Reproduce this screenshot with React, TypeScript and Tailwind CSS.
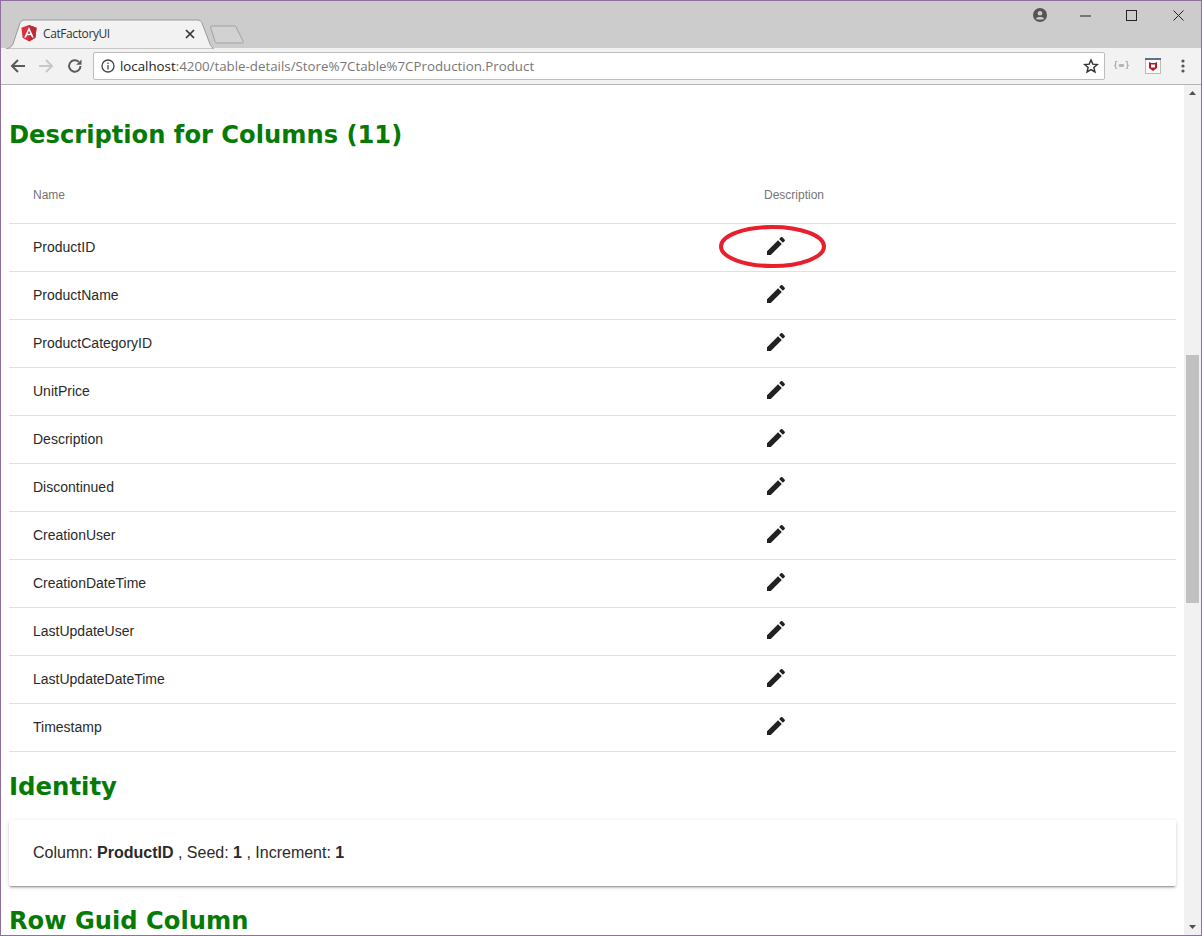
import React from "react";

const rows = ["ProductID","ProductName","ProductCategoryID","UnitPrice","Description","Discontinued","CreationUser","CreationDateTime","LastUpdateUser","LastUpdateDateTime","Timestamp"];

function Edit() {
  return (
    <svg className="mb-[4px]" width="24" height="24" viewBox="0 0 24 24" fill="#212121">
      <path d="M3 17.25V21h3.75L17.81 9.94l-3.75-3.75L3 17.25zM20.71 7.04c.39-.39.39-1.02 0-1.41l-2.34-2.34c-.39-.39-1.02-.39-1.41 0l-1.83 1.83 3.75 3.75 1.83-1.83z" />
    </svg>
  );
}

function Tab() {
  return (
    <div className="relative flex h-[29px] w-[208px] items-center pl-[15px]">
      <svg className="absolute left-0 top-0" width="208" height="30" viewBox="0 0 208 30">
        <path d="M0.5 29.5 C4 29.5 6 27 7 25 L14 4 C15 2 16 1 19 1 L191 1 C194 1 195 2 196 4 L204 25 C205 27 206 29 208 29.5 L208 30 L0 30 Z" fill="#f2f2f2" stroke="#9a9a9a" strokeWidth="1" />
      </svg>
      <svg className="relative" width="16" height="17" viewBox="0 0 16 17">
        <path d="M8 0 L15.6 2.7 L14.4 12.8 L8 16.6 L1.6 12.8 L0.4 2.7 Z" fill="#d9323f" />
        <path d="M8 0 L15.6 2.7 L14.4 12.8 L8 16.6 Z" fill="#bb2a35" />
        <path d="M8 2 L3.2 12.6 H5 L6 10.2 H10 L11 12.6 H12.8 Z M6.7 8.7 L8 5.6 L9.3 8.7 Z" fill="#fff" />
      </svg>
      <span className="relative ml-[6px] font-['Open_Sans',sans-serif] text-[12px] tracking-[-0.4px] text-[#333]">CatFactoryUI</span>
      <svg className="absolute left-[179px] top-[10px]" width="10" height="10" viewBox="0 0 10 10" stroke="#333" strokeWidth="1.7" fill="none">
        <path d="M1 1 L9 9 M9 1 L1 9" />
      </svg>
    </div>
  );
}

export default function App() {
  return (
    <div className="flex h-[936px] w-[1202px] flex-col overflow-hidden border border-[#8f6f9d] bg-white font-['Liberation_Sans',sans-serif]">
      {/* title bar */}
      <div className="flex h-[47px] shrink-0 items-end justify-between bg-[#cccccc] pl-[5px]">
        <div className="flex items-end">
          <Tab />
          <svg className="mb-[3px] ml-[-5px]" width="38" height="20" viewBox="0 0 38 20">
            <path d="M1.5 2 C1.5 1.2 2 1 3 1 L25 1 C26 1 26.5 1.3 27 2 L34 16 C34.5 17.5 34 18 33 18 L8 18 C7 18 6.5 17.5 6 16.5 Z" fill="#d2d2d2" stroke="#a0a0a0" />
          </svg>
        </div>
        <div className="flex h-full items-start">
          <svg className="mr-[33px] mt-[7px]" width="14" height="14" viewBox="0 0 14 14">
            <circle cx="7" cy="7" r="7" fill="#555" />
            <circle cx="7" cy="5.2" r="2.3" fill="#ccc" />
            <path d="M2.8 10.6 C4 8.6 10 8.6 11.2 10.6 C10 12.2 4 12.2 2.8 10.6 Z" fill="#ccc" />
          </svg>
          <svg className="mr-[35px] mt-[14px]" width="11" height="2" viewBox="0 0 11 2"><rect width="11" height="1" y="0.5" fill="#222" /></svg>
          <svg className="mr-[36px] mt-[9px]" width="11" height="11" viewBox="0 0 11 11" fill="none" stroke="#222"><rect x="0.5" y="0.5" width="10" height="10" /></svg>
          <svg className="mr-[17px] mt-[9px]" width="11" height="11" viewBox="0 0 11 11" fill="none" stroke="#222"><path d="M0.5 0.5 L10.5 10.5 M10.5 0.5 L0.5 10.5" /></svg>
        </div>
      </div>
      {/* toolbar */}
      <div className="flex h-[37px] shrink-0 items-center border-b border-[#b4b4b4] bg-[#f2f2f2] pl-[9px]">
        <svg width="16" height="16" viewBox="0 0 16 16" fill="none" stroke="#5a5a5a" strokeWidth="2"><path d="M15 8 H2 M8 2 L2 8 L8 14" /></svg>
        <svg className="ml-[12px]" width="16" height="16" viewBox="0 0 16 16" fill="none" stroke="#c8c8c8" strokeWidth="2"><path d="M1 8 H14 M8 2 L14 8 L8 14" /></svg>
        <svg className="ml-[13px]" width="16" height="16" viewBox="0 0 16 16" fill="none" stroke="#5a5a5a" strokeWidth="2"><path d="M13.5 8 A5.7 5.7 0 1 1 11.8 3.9" /><path d="M14.5 1.5 V6.8 H9.2 Z" fill="#5a5a5a" stroke="none" /></svg>
        <div className="ml-[10px] flex h-[28px] w-[1012px] items-center rounded-[2px] border border-[#bdbdbd] bg-white pl-[7px] pr-[5px]">
          <svg width="14" height="14" viewBox="0 0 14 14" fill="none" stroke="#444" strokeWidth="1.3"><circle cx="7" cy="7" r="6" /><path d="M7 6 V10.5 M7 3.4 V5" /></svg>
          <span className="ml-[5px] flex-1 whitespace-nowrap pt-[1px] font-['Open_Sans',sans-serif] text-[13.3px] text-[#777]"><span className="text-[#222]">localhost</span>:4200/table-details/Store%7Ctable%7CProduction.Product</span>
          <svg width="16" height="16" viewBox="0 0 24 24" fill="none" stroke="#333" strokeWidth="2.2"><path d="M12 3 L14.7 9.2 L21.4 9.8 L16.3 14.2 L17.9 20.8 L12 17.3 L6.1 20.8 L7.7 14.2 L2.6 9.8 L9.3 9.2 Z" /></svg>
        </div>
        <span className="ml-[8px] w-[14px] whitespace-nowrap font-['DejaVu_Sans',sans-serif] text-[8px] text-[#888]">{"{≡}"}</span>
        <svg className="ml-[18px]" width="16" height="16" viewBox="0 0 16 16">
          <rect x="0.5" y="0.5" width="15" height="15" fill="#fafafa" stroke="#bbb" />
          <rect x="0" y="0" width="16" height="2" fill="#5d7287" />
          <path d="M4 4 L6 5 H10 L12 4 V10 L8 13 L4 10 Z" fill="#b1182b" />
          <rect x="6" y="6.5" width="4" height="3" fill="#fafafa" />
        </svg>
        <svg className="ml-[20px]" width="4" height="14" viewBox="0 0 4 14" fill="#555"><circle cx="2" cy="2" r="1.6" /><circle cx="2" cy="7" r="1.6" /><circle cx="2" cy="12" r="1.6" /></svg>
      </div>
      {/* page */}
      <div className="flex min-h-0 flex-1">
        <main className="relative min-w-0 flex-1 overflow-hidden px-[8px] pt-[36px]">
          <h2 className="mb-[18px] whitespace-nowrap font-['DejaVu_Sans',sans-serif] text-[24.2px] font-bold leading-[28px] text-[#057a05]">Description for Columns (11)</h2>
          <div className="flex h-[57px] items-center border-b border-[#e0e0e0] pl-[24px] text-[12px] text-[#757575]">
            <div className="w-[731px]">Name</div>
            <div>Description</div>
          </div>
          {rows.map((name) => (
            <div key={name} className="flex h-[48px] items-center border-b border-[#e0e0e0] pl-[24px] text-[14px] text-[#2a2a2a]">
              <div className="w-[731px]">{name}</div>
              <Edit />
            </div>
          ))}
          <h2 className="mb-[19px] mt-[21px] font-['DejaVu_Sans',sans-serif] text-[24.4px] font-bold leading-[28px] text-[#057a05]">Identity</h2>
          <div className="flex h-[66px] items-center rounded-[2px] bg-white px-[24px] text-[16px] text-[#2a2a2a] shadow-[0_3px_1px_-2px_rgba(0,0,0,0.2),0_2px_2px_0_rgba(0,0,0,0.14),0_1px_5px_0_rgba(0,0,0,0.12)]">
            <span>Column: <b>ProductID</b> , Seed: <b>1</b> , Increment: <b>1</b></span>
          </div>
          <h2 className="mt-[21px] whitespace-nowrap font-['DejaVu_Sans',sans-serif] text-[24.2px] font-bold leading-[28px] text-[#057a05]">Row Guid Column</h2>
          {/* hand-drawn annotation */}
          <svg className="absolute left-[718px] top-[139px]" width="108" height="46" viewBox="0 0 108 46" fill="none">
            <ellipse cx="53.5" cy="22.5" rx="51.5" ry="19.5" stroke="#e8202e" strokeWidth="4" />
          </svg>
        </main>
        {/* scrollbar */}
        <div className="flex w-[17px] shrink-0 flex-col bg-[#f1f1f1]">
          <svg className="mt-[5px]" width="17" height="6" viewBox="0 0 17 6"><path d="M5 5 L8.5 1 L12 5 Z" fill="#505050" /></svg>
          <div className="ml-[2px] mr-[2px] mt-[259px] h-[248px] bg-[#c1c1c1]" />
          <div className="flex-1" />
          <svg className="mb-[5px]" width="17" height="6" viewBox="0 0 17 6"><path d="M5 1 L8.5 5 L12 1 Z" fill="#505050" /></svg>
        </div>
      </div>
    </div>
  );
}
